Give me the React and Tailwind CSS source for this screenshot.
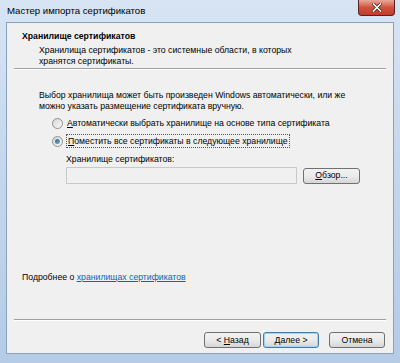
import React from "react";

const font = { fontFamily: '"Liberation Sans", Arial, sans-serif' };

function Radio({ checked }) {
  return (
    <div className="w-[11px] h-[11px] rounded-full border border-[#8e8f8f] bg-gradient-to-br from-[#d5d5d5] to-[#fbfbfb] flex items-center justify-center shrink-0">
      {checked && (
        <div className="w-[5px] h-[5px] rounded-full bg-gradient-to-br from-[#2a628c] to-[#7ab2e0]" />
      )}
    </div>
  );
}

function Btn({ children, focused, w = "w-[57px]" }) {
  return (
    <div
      className={`${w} h-[16px] rounded-[3px] border ${
        focused ? "border-[#3c7fb1] shadow-[inset_0_0_0_1px_#9fd4f5]" : "border-[#707070]"
      } bg-gradient-to-b from-[#f2f2f2] via-[#ebebeb] to-[#d6d6d6] flex items-center justify-center text-[8.7px] text-black leading-none`}
    >
      {children}
    </div>
  );
}

export default function App() {
  return (
    <div
      className="w-[400px] h-[363px] relative bg-gradient-to-b from-[#d7e4f4] via-[#c3d6ec] to-[#b5cbe6] flex flex-col"
      style={font}
    >
      {/* title bar */}
      <div className="h-[22px] flex items-center pl-[7px] text-[9.6px] text-black leading-none">
        Мастер импорта сертификатов
      </div>
      <div className="absolute top-0 right-[5px] w-[37px] h-[16px] rounded-b-[4px] border border-t-0 border-[#5a2020] bg-gradient-to-b from-[#e8a89a] via-[#d0523e] to-[#c33b28] flex items-center justify-center">
        <svg width="10" height="9" viewBox="0 0 10 9">
          <path d="M1.5 1 L8.5 8 M8.5 1 L1.5 8" stroke="#3a1a14" strokeWidth="3" strokeLinecap="square" />
          <path d="M1.5 1 L8.5 8 M8.5 1 L1.5 8" stroke="#ffffff" strokeWidth="1.6" strokeLinecap="square" />
        </svg>
      </div>

      {/* inner panel */}
      <div className="mx-[6px] h-[332px] border border-[#8aa2c0] bg-[#f0f0f0] flex flex-col">
        {/* header */}
        <div className="h-[45px] flex flex-col pt-[8px]">
          <div className="pl-[15px] text-[8.7px] font-bold leading-[11px] text-black">
            Хранилище сертификатов
          </div>
          <div className="pl-[32px] pt-[3px] text-[8.7px] leading-[11px] text-black">
            <div>Хранилища сертификатов - это системные области, в которых</div>
            <div>хранятся сертификаты.</div>
          </div>
        </div>
        <div className="mx-[7px] h-[2px] border-t border-[#a0a0a0] border-b border-b-white" />

        {/* body */}
        <div className="flex flex-col pl-[32px] pt-[20px] text-[8.7px] leading-[11px] text-black">
          <div>Выбор хранилища может быть произведен Windows автоматически, или же</div>
          <div>можно указать размещение сертификата вручную.</div>

          <div className="flex items-center gap-[3px] pl-[13px] mt-[5px] h-[12px]">
            <Radio />
            <span className="pl-[1px]">
              <span className="underline">А</span>втоматически выбрать хранилище на основе типа сертификата
            </span>
          </div>
          <div className="flex items-center gap-[3px] pl-[13px] mt-[5px] h-[14px]">
            <Radio checked />
            <span className="border border-dotted border-[#555] px-[1px] leading-[12px]">
              <span className="underline">П</span>оместить все сертификаты в следующее хранилище
            </span>
          </div>

          <div className="pl-[27px] mt-[6px]">Хранилище сертификатов:</div>
          <div className="flex items-center pl-[27px] mt-[2px] gap-[6px]">
            <div className="w-[231px] h-[17px] border border-[#c9c9c9] bg-[#f0f0f0]" />
            <Btn w="w-[57px]">
              <span><span className="underline">О</span>бзор...</span>
            </Btn>
          </div>
        </div>

        <div className="flex-1" />

        <div className="pl-[15px] text-[8.7px] leading-[11px] text-black mb-[36px]">
          Подробнее о{" "}
          <span className="text-[#0066cc] underline">хранилищах сертификатов</span>
        </div>

        <div className="mx-[7px] h-[2px] border-t border-[#a0a0a0] border-b border-b-white" />

        <div className="flex justify-end items-center pr-[8px] pt-[11px] pb-[5px]">
          <Btn>
            <span>&lt; <span className="underline">Н</span>азад</span>
          </Btn>
          <div className="w-[2px]" />
          <Btn focused w="w-[56px]">
            <span><span className="underline">Д</span>алее &gt;</span>
          </Btn>
          <div className="w-[10px]" />
          <Btn w="w-[56px]">Отмена</Btn>
        </div>
      </div>
    </div>
  );
}
